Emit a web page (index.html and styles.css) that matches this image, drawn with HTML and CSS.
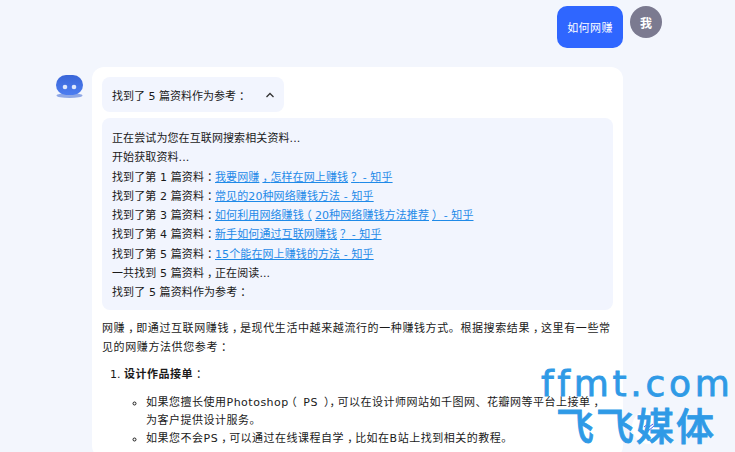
FILE: index.html
```html
<!DOCTYPE html>
<html lang="zh-CN">
<head>
<meta charset="utf-8">
<title>如何网赚</title>
<link rel="stylesheet" href="styles.css">
</head>
<body>
<main class="chat">
  <section class="row row-user">
    <div class="bubble-user">如何网赚</div>
    <div class="avatar-user">我</div>
  </section>
  <section class="row row-bot">
    <svg class="avatar-bot" width="27" height="24" viewBox="0 0 27 24" aria-hidden="true">
      <defs><linearGradient id="g" x1="0" y1="0" x2="0" y2="1"><stop offset="0" stop-color="#3a66d8"/><stop offset="1" stop-color="#4c7df0"/></linearGradient></defs>
      <ellipse cx="13.5" cy="20.5" rx="13" ry="2.5" fill="#8fa8e6"/>
      <rect x="0" y="0" width="27" height="20" rx="10" fill="url(#g)"/>
      <circle cx="9" cy="12" r="2.3" fill="#dfe7fb"/>
      <circle cx="18" cy="12" r="2.3" fill="#dfe7fb"/>
    </svg>
    <article class="card">
      <div class="summary">
        <span class="summary-text">找到了 5 篇资料作为参考<span class="pr">：</span></span>
        <svg class="chevron" width="10" height="6" viewBox="0 0 10 6" aria-hidden="true"><path d="M2.5 5 L6 1.5 L9.5 5" fill="none" stroke="#333" stroke-width="1.3"/></svg>
      </div>
      <div class="log">
        <p>正在尝试为您在互联网搜索相关资料...</p>
        <p>开始获取资料...</p>
        <p>找到了第 1 篇资料<span class="pr">：</span><a href="#">我要网赚<span class="pr">，</span>怎样在网上赚钱<span class="pr">？</span> - 知乎</a></p>
        <p>找到了第 2 篇资料<span class="pr">：</span><a href="#">常见的20种网络赚钱方法 - 知乎</a></p>
        <p>找到了第 3 篇资料<span class="pr">：</span><a href="#">如何利用网络赚钱<span class="pl">（</span>20种网络赚钱方法推荐<span class="pr">）</span> - 知乎</a></p>
        <p>找到了第 4 篇资料<span class="pr">：</span><a href="#">新手如何通过互联网赚钱<span class="pr">？</span> - 知乎</a></p>
        <p>找到了第 5 篇资料<span class="pr">：</span><a href="#">15个能在网上赚钱的方法 - 知乎</a></p>
        <p>一共找到 5 篇资料<span class="pr">，</span>正在阅读...</p>
        <p>找到了 5 篇资料作为参考<span class="pr">：</span></p>
      </div>
      <p class="intro">网赚<span class="pr">，</span>即通过互联网赚钱<span class="pr">，</span>是现代生活中越来越流行的一种赚钱方式。根据搜索结果<span class="pr">，</span>这里有一些常见的网赚方法供您参考<span class="pr">：</span></p>
      <ol class="steps">
        <li><strong>设计作品接单</strong><span class="pr">：</span>
          <ul>
            <li>如果您擅长使用Photoshop<span class="pl">（</span><span class="abbr">PS</span><span class="pr">）</span><span class="pr">，</span>可以在设计师网站如千图网、花瓣网等平台上接单<span class="pr">，</span><br>为客户提供设计服务。</li>
            <li>如果您不会PS<span class="pr">，</span>可以通过在线课程自学<span class="pr">，</span>比如在B站上找到相关的教程。</li>
          </ul>
        </li>
      </ol>
    </article>
  </section>
</main>
<div class="fab">
  <svg width="12" height="10" viewBox="0 0 12 10" aria-hidden="true"><path d="M1 5 L6 1 M2 8 L10 2 M5 9 L11 4" fill="none" stroke="#3f5ff0" stroke-width="1"/></svg>
</div>
<div class="watermark"><div class="wm-en">ffmt.com</div><div class="wm-cn">飞飞媒体</div></div>
</body>
</html>
```
FILE: styles.css
```css
* { box-sizing: border-box; }
html, body { margin: 0; height: 452px; overflow: hidden; }
body { background: #f3f6fd; font-family: "DejaVu Sans", "Noto Sans CJK SC", sans-serif; font-size: 11px; color: #1a1a1a; position: relative; }
.chat { display: flex; flex-direction: column; gap: 19px; padding: 6px 73px 0 56px; }
.row { display: flex; }
.row-user { justify-content: flex-end; gap: 7px; }
.bubble-user { width: 66px; height: 42px; background: #2f66ff; color: #fff; border-radius: 10px; display: flex; align-items: center; justify-content: center; letter-spacing: .4px; }
.avatar-user { width: 32px; height: 32px; border-radius: 50%; background: #7b7a90; color: #fff; font-weight: 700; font-size: 12px; display: flex; align-items: center; justify-content: center; }
.row-bot { gap: 9px; align-items: flex-start; }
.avatar-bot { margin-top: 8px; flex: none; }
.card { width: 531px; background: #fff; border-radius: 12px; padding: 10px; }
.pr { margin-left: 3px; letter-spacing: -3px; }
.pl { margin-left: -3px; margin-right: 3px; }
.abbr { margin: 0 3px; }
.summary { width: 182px; height: 35px; background: #f2f5fe; border-radius: 8px; padding: 0 10px; display: flex; align-items: center; justify-content: space-between; }
.summary-text { white-space: nowrap; }
.log { margin-top: 6px; background: #f2f5fe; border-radius: 8px; padding: 11px 10px 8px; line-height: 19.25px; letter-spacing: .1px; }
.log p { margin: 0; }
.log a { color: #1f8ae8; text-decoration: underline; }
.intro { margin: 9px 0 0; line-height: 19px; letter-spacing: .6px; }
.steps { margin: 9px 0 0; padding: 0 0 0 22px; line-height: 18px; }
.steps strong { letter-spacing: .5px; }
.steps ul { margin: 10px 0 0; padding-left: 22px; list-style: circle; letter-spacing: .5px; }
.fab { position: absolute; left: 632px; top: 410px; width: 34px; height: 34px; border-radius: 50%; background: #fff; display: flex; align-items: center; justify-content: center; }
.watermark { position: absolute; left: 541px; top: 366px; color: #2f9ae6; pointer-events: none; }
.wm-en { font-family: "DejaVu Sans", sans-serif; font-size: 36px; line-height: 36px; letter-spacing: 3.7px; -webkit-text-stroke: .8px #2f9ae6; white-space: nowrap; }
.wm-cn { font-family: "Noto Sans CJK SC", sans-serif; font-weight: 500; font-size: 38px; line-height: 44px; margin-left: 15px; white-space: nowrap; letter-spacing: 2px; -webkit-text-stroke: .8px #2f9ae6; }
```
